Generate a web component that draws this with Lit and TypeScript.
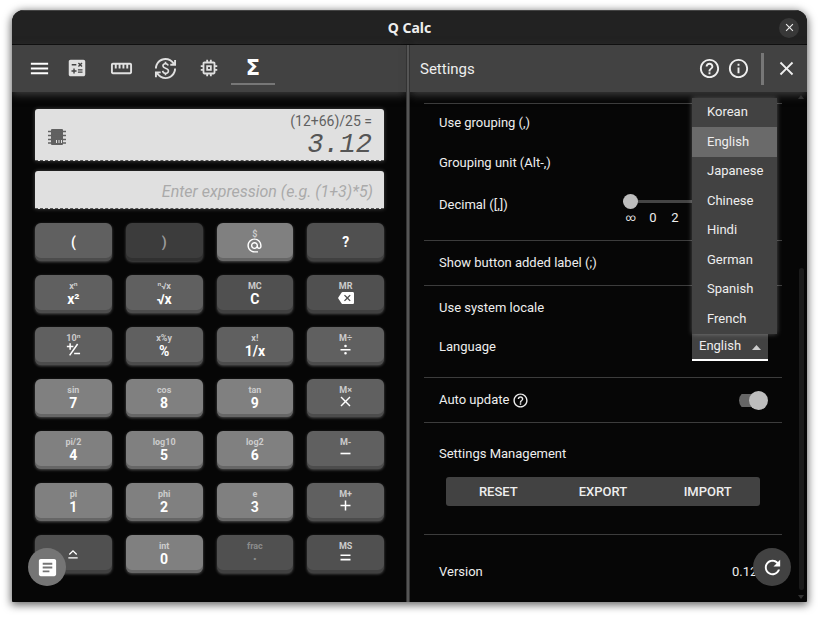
import { LitElement, html, css, svg, nothing } from "lit";
import type { TemplateResult } from "lit";
import { customElement, property, state } from "lit/decorators.js";
import { classMap } from "lit/directives/class-map.js";

const PATHS: Record<string, string> = {
  menu: "M3 6h18v2H3V6m0 5h18v2H3v-2m0 5h18v2H3v-2z",
  calc: "M19 3H5c-1.1 0-2 .9-2 2v14c0 1.1.9 2 2 2h14c1.1 0 2-.9 2-2V5c0-1.1-.9-2-2-2zm-5.97 4.06L14.09 6l1.41 1.41L16.91 6l1.06 1.06-1.41 1.41 1.41 1.41-1.06 1.06-1.41-1.4-1.41 1.41-1.06-1.06 1.41-1.41-1.41-1.42zm-6.78.66h5v1.5h-5v-1.5zM11.5 16h-2v2H8v-2H6v-1.5h2v-2h1.5v2h2V16zm6.5 1.25h-5v-1.5h5v1.5zm0-2.5h-5v-1.5h5v1.5z",
  ruler: "M21 6H3c-1.1 0-2 .9-2 2v8c0 1.1.9 2 2 2h18c1.1 0 2-.9 2-2V8c0-1.1-.9-2-2-2zm0 10H3V8h2v4h2V8h2v4h2V8h2v4h2V8h2v4h2V8h2v8z",
  currency: "M12.89 11.1c-1.78-.59-2.64-.96-2.64-1.9 0-1.02 1.11-1.39 1.81-1.39 1.31 0 1.79.99 1.9 1.34l1.58-.67c-.15-.44-.82-1.91-2.66-2.23V5h-1.75v1.26c-2.6.56-2.62 2.85-2.62 2.96 0 2.27 2.25 2.91 3.35 3.31 1.58.56 2.28 1.07 2.28 2.03 0 1.13-1.05 1.61-1.98 1.61-1.82 0-2.34-1.87-2.4-2.09l-1.66.67c.63 2.19 2.28 2.78 3.02 2.96V19h1.75v-1.24c.52-.09 3.02-.59 3.02-3.22.01-1.39-.6-2.61-3-3.44zM3 21H1v-6h6v2H4.52c1.61 2.41 4.36 4 7.48 4 4.97 0 9-4.03 9-9h2c0 6.08-4.92 11-11 11-3.72 0-7.01-1.85-9-4.67V21zM1 12C1 5.92 5.92 1 12 1c3.72 0 7.01 1.85 9 4.67V3h2v6h-6V7h2.48C17.87 4.59 15.12 3 12 3c-4.97 0-9 4.03-9 9H1z",
  memory: "M15 9H9v6h6V9zm-2 4h-2v-2h2v2zm8-2V9h-2V7c0-1.1-.9-2-2-2h-2V3h-2v2h-2V3H9v2H7c-1.1 0-2 .9-2 2v2H3v2h2v2H3v2h2v2c0 1.1.9 2 2 2h2v2h2v-2h2v2h2v-2h2c1.1 0 2-.9 2-2v-2h2v-2h-2v-2h2zm-4 6H7V7h10v10z",
  help: "M11 18h2v-2h-2v2zm1-16C6.48 2 2 6.48 2 12s4.48 10 10 10 10-4.48 10-10S17.52 2 12 2zm0 18c-4.41 0-8-3.59-8-8s3.59-8 8-8 8 3.59 8 8-3.59 8-8 8zm0-14c-2.21 0-4 1.79-4 4h2c0-1.1.9-2 2-2s2 .9 2 2c0 2-3 1.75-3 5h2c0-2.25 3-2.5 3-5 0-2.21-1.79-4-4-4z",
  info: "M11 7h2v2h-2V7zm0 4h2v6h-2v-6zm1-9C6.48 2 2 6.48 2 12s4.48 10 10 10 10-4.48 10-10S17.52 2 12 2zm0 18c-4.41 0-8-3.59-8-8s3.59-8 8-8 8 3.59 8 8-3.59 8-8 8z",
  close: "M19 6.41L17.59 5 12 10.59 6.41 5 5 6.41 10.59 12 5 17.59 6.41 19 12 13.41 17.59 19 19 17.59 13.41 12z",
  article: "M19 3H5c-1.1 0-2 .9-2 2v14c0 1.1.9 2 2 2h14c1.1 0 2-.9 2-2V5c0-1.1-.9-2-2-2zm-5 14H7v-2h7v2zm3-4H7v-2h10v2zm0-4H7V7h10v2z",
  refresh: "M17.65 6.35C16.2 4.9 14.21 4 12 4c-4.42 0-7.99 3.58-7.99 8s3.57 8 7.99 8c3.73 0 6.84-2.55 7.73-6h-2.08c-.82 2.33-3.04 4-5.65 4-3.31 0-6-2.69-6-6s2.69-6 6-6c1.66 0 3.14.69 4.22 1.78L13 11h7V4l-2.35 2.35z",
  backspace: "M22 3H7c-.69 0-1.23.35-1.59.88L0 12l5.41 8.11c.36.53.9.89 1.59.89h15c1.1 0 2-.9 2-2V5c0-1.1-.9-2-2-2zm-3 12.59L17.59 17 14 13.41 10.41 17 9 15.59 12.59 12 9 8.41 10.41 7 14 10.59 17.59 7 19 8.41 15.41 12 19 15.59z",
  at: "M12 2C6.48 2 2 6.48 2 12s4.48 10 10 10h5v-2h-5c-4.34 0-8-3.66-8-8s3.66-8 8-8 8 3.66 8 8v1.43c0 .79-.71 1.57-1.5 1.57s-1.5-.78-1.5-1.57V12c0-2.76-2.24-5-5-5s-5 2.24-5 5 2.24 5 5 5c1.38 0 2.64-.56 3.54-1.47.65.89 1.77 1.47 2.96 1.47 1.97 0 3.5-1.6 3.5-3.57V12c0-5.52-4.48-10-10-10zm0 13c-1.66 0-3-1.34-3-3s1.34-3 3-3 3 1.34 3 3-1.34 3-3 3z",
  divide: "M4 11h16v2.4H4zM12 4.2a2.1 2.1 0 1 1 0 4.2 2.1 2.1 0 0 1 0-4.2M12 15.8a2.1 2.1 0 1 1 0 4.2 2.1 2.1 0 0 1 0-4.2",
  times: "M20 5.6L18.4 4 12 10.4 5.6 4 4 5.6l6.4 6.4L4 18.4 5.6 20l6.4-6.4 6.4 6.4 1.6-1.6-6.4-6.4z",
  minus: "M4 10.7h16v2.6H4z",
  plus: "M20 13.2h-6.8V20h-2.4v-6.8H4v-2.4h6.8V4h2.4v6.8H20z",
  equals: "M4 7h16v2.6H4zM4 14h16v2.6H4z",
  sign: "M5.4 2h2.4v4h4v2.400h-4v4H5.400v-4h-4V6h4zM17.600 2.500l2 1.300L6.800 22 4.800 20.600zM13 17h9.500v2.400H13z",
  eject: "M12 5l7.200 7.200-1.600 1.600L12 8.200l-5.600 5.600-1.600-1.600zM4 17.500h16v2.400H4z",
};

function icon(name: string, size: number): TemplateResult {
  return html`<svg viewBox="0 0 24 24" width=${size} height=${size} fill="currentColor" aria-hidden="true">
    ${svg`<path d=${PATHS[name]}></path>`}
  </svg>`;
}

type Tone = "num" | "op" | "dark" | "off" | "dim";

interface Key {
  tone: Tone;
  main?: string;
  top?: string;
  icon?: string;
  size?: number;
  label?: string;
}

const KEYS: Key[] = [
  { tone: "op", main: "(" },
  { tone: "off", main: ")" },
  { tone: "num", top: "$", icon: "at", size: 17, label: "At" },
  { tone: "dark", main: "?" },
  { tone: "op", top: "xⁿ", main: "x²" },
  { tone: "op", top: "ⁿ√x", main: "√x" },
  { tone: "dark", top: "MC", main: "C" },
  { tone: "dark", top: "MR", icon: "backspace", size: 16, label: "Backspace" },
  { tone: "op", top: "10ⁿ", icon: "sign", size: 15, label: "Change sign" },
  { tone: "op", top: "x%y", main: "%" },
  { tone: "op", top: "x!", main: "1/x" },
  { tone: "op", top: "M÷", icon: "divide", size: 15, label: "Divide" },
  { tone: "num", top: "sin", main: "7" },
  { tone: "num", top: "cos", main: "8" },
  { tone: "num", top: "tan", main: "9" },
  { tone: "op", top: "M×", icon: "times", size: 15, label: "Multiply" },
  { tone: "num", top: "pi/2", main: "4" },
  { tone: "num", top: "log10", main: "5" },
  { tone: "num", top: "log2", main: "6" },
  { tone: "op", top: "M-", icon: "minus", size: 15, label: "Subtract" },
  { tone: "num", top: "pi", main: "1" },
  { tone: "num", top: "phi", main: "2" },
  { tone: "num", top: "e", main: "3" },
  { tone: "op", top: "M+", icon: "plus", size: 15, label: "Add" },
  { tone: "dark", icon: "eject", size: 14, label: "More keys" },
  { tone: "num", top: "int", main: "0" },
  { tone: "dim", top: "frac", main: "·" },
  { tone: "dark", top: "MS", icon: "equals", size: 15, label: "Equals" },
];

const LANGUAGES = ["Korean", "English", "Japanese", "Chinese", "Hindi", "German", "Spanish", "French"];

const base = css`
  * {
    box-sizing: border-box;
  }
  button {
    font: inherit;
    color: inherit;
    border: 0;
    padding: 0;
    margin: 0;
    background: none;
    display: flex;
    align-items: center;
    justify-content: center;
    cursor: pointer;
  }
  svg {
    display: block;
    flex: none;
  }
`;

@customElement("calc-key")
export class CalcKey extends LitElement {
  @property({ attribute: false }) key!: Key;

  static styles = [
    base,
    css`
      :host {
        display: block;
      }
      .key {
        width: 100%;
        height: 38px;
        flex-direction: column;
        border-radius: 6px;
        color: #fff;
        font-weight: 700;
        box-shadow: inset 0 -3px 0 rgba(0, 0, 0, 0.2), 0 1px 3px rgba(255, 255, 255, 0.3);
      }
      .num { background: #808080; }
      .op { background: #606060; }
      .dark { background: #505050; }
      .off { background: #3c3c3c; color: #9a9a9a; }
      .dim { background: #505050; color: #8c8c8c; }
      .top {
        font-size: 9px;
        line-height: 11px;
        color: #ccc;
      }
      .dim .top { color: #8c8c8c; }
      .main {
        height: 15px;
        font-size: 14px;
        line-height: 15px;
        display: flex;
        align-items: center;
      }
      .top + .glyph { padding-bottom: 4px; }
    `,
  ];

  render() {
    const k = this.key;
    return html`<button class=${classMap({ key: true, [k.tone]: true })} aria-label=${k.label ?? nothing}>
      ${k.top ? html`<span class="top">${k.top}</span>` : nothing}
      <span class=${classMap({ main: true, glyph: !!k.icon })}>${k.icon ? icon(k.icon, k.size ?? 15) : k.main}</span>
    </button>`;
  }
}

@customElement("calc-pane")
export class CalcPane extends LitElement {
  static styles = [
    base,
    css`
      :host {
        display: flex;
        flex-direction: column;
        position: relative;
        min-width: 0;
      }
      .bar {
        height: 47px;
        padding-left: 12px;
        display: flex;
        background: #424242;
        color: #e0e0e0;
        box-shadow: 0 3px 8px #3c3c3c;
      }
      .menu { width: 31px; color: #fff; }
      .tab {
        width: 44px;
        height: 40px;
        padding-top: 8px;
        border-bottom: 2px solid transparent;
      }
      .tab.on {
        color: #fff;
        border-bottom-color: #777;
      }
      .sigma {
        font: 700 21px/24px "DejaVu Sans", sans-serif;
      }
      .body {
        flex: 1;
        padding: 17px 22px 24px 23px;
        display: flex;
        flex-direction: column;
      }
      .display,
      .expr {
        background: #e0e0e0;
        border: 0;
        border-bottom: 1px dashed #555;
        border-radius: 3px 3px 0 0;
        box-shadow: 0 0 4px rgba(255, 255, 255, 0.25);
      }
      .display {
        height: 52px;
        padding: 0 12px 0 13px;
        display: flex;
        align-items: center;
        justify-content: space-between;
        color: #616161;
      }
      .chip { margin-top: 4px; }
      .readout { text-align: right; }
      .formula {
        font-size: 14px;
        line-height: 20px;
      }
      .result {
        display: block;
        font: italic 27px/28px "Liberation Mono", monospace;
        color: #555;
      }
      .expr {
        width: 100%;
        height: 38px;
        margin: 10px 0 14px;
        padding: 3px 11px 0;
        font: italic 16px/20px Roboto, sans-serif;
        text-align: right;
      }
      .expr::placeholder { color: #aaa; opacity: 1; }
      .keys {
        display: grid;
        grid-template-columns: repeat(4, 1fr);
        gap: 14px;
      }
      .fab {
        position: absolute;
        left: 16px;
        bottom: 16px;
        width: 38px;
        height: 38px;
        border-radius: 50%;
        background: #757575;
        color: #fff;
      }
    `,
  ];

  render() {
    return html`
      <nav class="bar">
        <button class="menu" aria-label="Menu">${icon("menu", 23)}</button>
        <button class="tab" aria-label="Calculator">${icon("calc", 22)}</button>
        <button class="tab" aria-label="Units">${icon("ruler", 23)}</button>
        <button class="tab" aria-label="Currency">${icon("currency", 23)}</button>
        <button class="tab" aria-label="Programmer">${icon("memory", 22)}</button>
        <button class="tab on" aria-label="Expression"><span class="sigma">Σ</span></button>
      </nav>
      <div class="body">
        <div class="display">
          <svg class="chip" viewBox="0 0 18 16" width="18" height="16" aria-hidden="true">
            <rect x="3" y="0" width="12" height="16" rx="1" fill="#616161"></rect>
            <path d="M0 2.500h18M0 6.500h18M0 10.500h18M0 14h18" stroke="#616161" stroke-width="1.500"></path>
            <path d="M8.500 11v3M11 11v3M13.500 11v3" stroke="#e0e0e0" stroke-width="1"></path>
          </svg>
          <div class="readout">
            <div class="formula">(12+66)/25 =</div>
            <output class="result">3.12</output>
          </div>
        </div>
        <input class="expr" type="text" aria-label="Expression" placeholder="Enter expression (e.g. (1+3)*5)" />
        <div class="keys">${KEYS.map((k) => html`<calc-key .key=${k}></calc-key>`)}</div>
      </div>
      <button class="fab" aria-label="History">${icon("article", 23)}</button>
    `;
  }
}

@customElement("settings-pane")
export class SettingsPane extends LitElement {
  @state() private language = "English";

  static styles = [
    base,
    css`
      :host {
        display: flex;
        flex-direction: column;
        position: relative;
        min-width: 0;
      }
      .bar {
        height: 47px;
        padding: 0 6px 0 10px;
        display: flex;
        align-items: center;
        background: #424242;
        box-shadow: 0 3px 8px #3c3c3c;
      }
      .title {
        flex: 1;
        margin: 0;
        font-size: 15px;
        font-weight: 400;
        line-height: 20px;
      }
      .tool { width: 29px; height: 32px; }
      .split {
        width: 3px;
        height: 32px;
        margin: 0 8px;
        background: #777;
      }
      .scroll {
        flex: 1;
        display: flex;
      }
      .list {
        flex: 1;
        min-width: 0;
        padding: 11px 0 0 14px;
      }
      .group {
        border-top: 1px solid #3c3c3c;
        padding: 0 14px 0 15px;
      }
      .row {
        display: flex;
        align-items: center;
        justify-content: space-between;
        height: 44px;
      }
      .format { padding-bottom: 14px; }
      .format .row { height: 42px; }
      .format .first { height: 38px; }
      .locale { padding-bottom: 13px; }
      .row.short { height: 34px; }
      .row.version {
        height: 67px;
        padding-top: 7px;
      }
      .label {
        display: flex;
        align-items: center;
        gap: 3px;
      }
      .decimal {
        width: 148px;
        padding-top: 10px;
      }
      .range {
        display: block;
        appearance: none;
        width: 140px;
        height: 15px;
        margin: 0 0 0 3px;
        background: linear-gradient(#444, #444) center / 100% 3px no-repeat;
      }
      .range::-webkit-slider-thumb {
        appearance: none;
        width: 15px;
        height: 15px;
        border-radius: 50%;
        background: #bdbdbd;
      }
      .ticks {
        display: grid;
        grid-template-columns: repeat(3, 22px);
        align-items: center;
        text-align: center;
        line-height: 18px;
      }
      .infinity { font-size: 10px; }
      .picker {
        position: relative;
        width: 76px;
      }
      .select {
        display: block;
        appearance: none;
        width: 100%;
        height: 27px;
        padding: 0 7px;
        border: 0;
        border-bottom: 2px solid #fff;
        border-radius: 0;
        background: #424242;
        color: #eee;
        font: inherit;
      }
      .caret {
        position: absolute;
        right: 7px;
        top: 11px;
        color: #ccc;
      }
      .options {
        position: absolute;
        left: 0;
        bottom: 100%;
        z-index: 2;
        width: 85px;
        height: 236px;
        margin: 0;
        padding: 0;
        list-style: none;
        display: grid;
        grid-auto-rows: 1fr;
        background: #424242;
        box-shadow: 0 0 5px rgba(255, 255, 255, 0.3);
      }
      .option {
        padding-left: 15px;
        display: flex;
        align-items: center;
      }
      .option.on { background: #6a6a6a; }
      .switch {
        appearance: none;
        position: relative;
        width: 29px;
        height: 19px;
        margin: 0;
        background: linear-gradient(#666, #666) left center / 24px 13px no-repeat;
        border-radius: 10px;
      }
      .switch::after {
        content: "";
        position: absolute;
        right: 0;
        top: 0;
        width: 19px;
        height: 19px;
        border-radius: 50%;
        background: #bdbdbd;
      }
      .manage {
        padding: 21px 22px 28px;
      }
      .heading {
        margin: 0 -7px 13px;
        font-size: 13px;
        font-weight: 400;
        line-height: 20px;
      }
      .actions {
        display: grid;
        grid-template-columns: repeat(3, 1fr);
        height: 29px;
        background: #424242;
        border-radius: 3px;
        font-weight: 500;
      }
      .track {
        width: 25px;
        padding: 3px 3px 3px 0;
        display: flex;
        flex-direction: column;
        align-items: flex-end;
        color: #333;
      }
      .thumb {
        width: 5px;
        height: 322px;
        margin: auto 0 5px;
        border-radius: 3px;
        background: #1a1a1a;
      }
      .fab {
        position: absolute;
        right: 16px;
        bottom: 16px;
        width: 38px;
        height: 38px;
        border-radius: 50%;
        background: #424242;
        color: #fff;
      }
    `,
  ];

  private pick(e: Event) {
    this.language = (e.target as HTMLSelectElement).value;
  }

  render() {
    return html`
      <header class="bar">
        <h2 class="title">Settings</h2>
        <button class="tool" aria-label="Help">${icon("help", 23)}</button>
        <button class="tool" aria-label="Information">${icon("info", 23)}</button>
        <span class="split"></span>
        <button class="tool" aria-label="Close settings">${icon("close", 23)}</button>
      </header>
      <div class="scroll">
        <div class="list">
          <div class="group format">
            <div class="row first">Use grouping (,)</div>
            <div class="row">Grouping unit (Alt-,)</div>
            <div class="row">
              <label for="decimal">Decimal ([,])</label>
              <div class="decimal">
                <input id="decimal" class="range" type="range" min="0" max="6" value="0" />
                <div class="ticks"><span class="infinity">∞</span><span>0</span><span>2</span></div>
              </div>
            </div>
          </div>
          <div class="group">
            <div class="row">Show button added label (;)</div>
          </div>
          <div class="group locale">
            <div class="row">Use system locale</div>
            <div class="row short">
              <label for="language">Language</label>
              <div class="picker">
                <select id="language" class="select" @change=${this.pick}>
                  ${LANGUAGES.map((l) => html`<option ?selected=${l === this.language}>${l}</option>`)}
                </select>
                <svg class="caret" viewBox="0 0 9 5" width="9" height="5" fill="currentColor" aria-hidden="true">
                  <path d="M0 5L4.500 0 9 5z"></path>
                </svg>
                <ul class="options" role="listbox" aria-label="Language">
                  ${LANGUAGES.map(
                    (l) => html`<li
                      class=${classMap({ option: true, on: l === this.language })}
                      role="option"
                      aria-selected=${l === this.language}
                      @click=${() => (this.language = l)}
                    >${l}</li>`,
                  )}
                </ul>
              </div>
            </div>
          </div>
          <div class="group">
            <div class="row">
              <label class="label" for="update">Auto update ${icon("help", 17)}</label>
              <input id="update" class="switch" type="checkbox" checked />
            </div>
          </div>
          <div class="group manage">
            <h3 class="heading">Settings Management</h3>
            <div class="actions">
              <button>RESET</button>
              <button>EXPORT</button>
              <button>IMPORT</button>
            </div>
          </div>
          <div class="group">
            <div class="row version"><span>Version</span><span>0.12.1</span></div>
          </div>
        </div>
        <div class="track">
          <svg viewBox="0 0 6 4" width="6" height="4" fill="currentColor" aria-hidden="true"><path d="M0 4l3-4 3 4z"></path></svg>
          <div class="thumb"></div>
          <svg viewBox="0 0 6 4" width="6" height="4" fill="currentColor" aria-hidden="true"><path d="M0 0l3 4 3-4z"></path></svg>
        </div>
      </div>
      <button class="fab" aria-label="Refresh">${icon("refresh", 23)}</button>
    `;
  }
}

@customElement("app-root")
export class AppRoot extends LitElement {
  static styles = [
    base,
    css`
      :host {
        display: flex;
        box-sizing: border-box;
        min-height: 100vh;
        padding: 10px 12px 15px;
        background: #fff;
        color: #eee;
        font: 13px/16px Roboto, "Noto Sans", sans-serif;
      }
      .window {
        flex: 1;
        display: flex;
        flex-direction: column;
        min-width: 0;
        border-radius: 12px 12px 1px 1px;
        overflow: hidden;
        background: #060606;
        box-shadow: 0 2px 8px 1px rgba(0, 0, 0, 0.6);
      }
      .titlebar {
        display: grid;
        grid-template-columns: 1fr auto 1fr;
        align-items: center;
        height: 35px;
        padding: 0 8px;
        background: #222;
        border-top: 1px solid #444;
        border-bottom: 1px solid #060606;
      }
      .name {
        grid-column: 2;
        margin: 0;
        font: 700 14px/20px "Noto Sans", sans-serif;
      }
      .close {
        justify-self: end;
        width: 20px;
        height: 20px;
        border-radius: 50%;
        background: #383838;
      }
      .panes {
        flex: 1;
        display: grid;
        grid-template-columns: 394fr 4px 397fr;
      }
      .divider {
        background: #555;
        border: solid #333;
        border-width: 0 1px;
        z-index: 1;
      }
    `,
  ];

  render() {
    return html`
      <main class="window">
        <header class="titlebar">
          <h1 class="name">Q Calc</h1>
          <button class="close" aria-label="Close window">${icon("close", 13)}</button>
        </header>
        <div class="panes">
          <calc-pane></calc-pane>
          <div class="divider"></div>
          <settings-pane></settings-pane>
        </div>
      </main>
    `;
  }
}
